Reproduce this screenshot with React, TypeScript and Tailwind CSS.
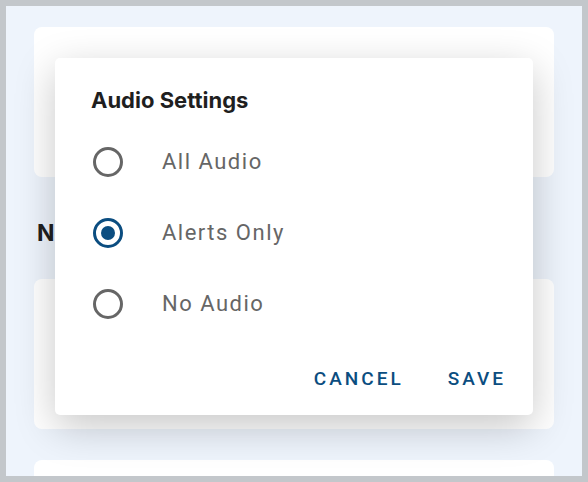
import { useState } from "react";

const options = ["All Audio", "Alerts Only", "No Audio"];

const Radio = ({ checked }: { checked: boolean }) => (
  <span
    className={
      checked
        ? "flex h-[30px] w-[30px] items-center justify-center rounded-full border-[3px] border-[#0b4d80]"
        : "flex h-[30px] w-[30px] items-center justify-center rounded-full border-[3px] border-[#666666]"
    }
  >
    {checked ? <span className="h-[14px] w-[14px] rounded-full bg-[#0b4d80]" /> : null}
  </span>
);

export default function App() {
  const [value, setValue] = useState("Alerts Only");

  return (
    <div className="h-[482px] w-[588px] bg-[#c3c7cb] p-[6px]">
      <div className="relative h-full w-full overflow-hidden bg-[#eef4fc] px-[28px] pt-[21px]">
        <div className="h-[150px] rounded-lg bg-white" />
        <h2 className="mt-[42px] pl-[3px] text-[23px] font-bold leading-[28px] text-[#202020] [font-family:Inter,sans-serif]">
          Notifications
        </h2>
        <div className="mt-[32px] h-[150px] rounded-lg bg-white" />
        <div className="mt-[31px] h-[150px] rounded-lg bg-white" />

        <div className="absolute left-[49px] top-[52px] flex h-[357px] w-[478px] flex-col rounded-[5px] bg-white pt-[28px] shadow-[0_12px_40px_rgba(0,0,0,0.22)]">
          <h1 className="pl-[36px] text-[22px] font-bold leading-[28px] text-[#1f1f1f] [font-family:Inter,sans-serif]">
            Audio Settings
          </h1>
          <div className="mt-[12px] flex flex-col pl-[38px]">
            {options.map((option) => (
              <button
                key={option}
                type="button"
                onClick={() => setValue(option)}
                className="flex h-[71px] items-center gap-[39px] text-left"
              >
                <Radio checked={value === option} />
                <span className="text-[22px] tracking-[1.5px] text-[#666666] [font-family:Roboto,sans-serif]">
                  {option}
                </span>
              </button>
            ))}
          </div>
          <div className="mt-[20px] flex justify-end gap-[28px] pr-[19px]">
            <button
              type="button"
              className="h-[40px] px-2 text-[19px] font-medium tracking-[3px] text-[#0b4d80] [font-family:Roboto,sans-serif]"
            >
              CANCEL
            </button>
            <button
              type="button"
              className="h-[40px] px-2 text-[19px] font-medium tracking-[3px] text-[#0b4d80] [font-family:Roboto,sans-serif]"
            >
              SAVE
            </button>
          </div>
        </div>
      </div>
    </div>
  );
}
